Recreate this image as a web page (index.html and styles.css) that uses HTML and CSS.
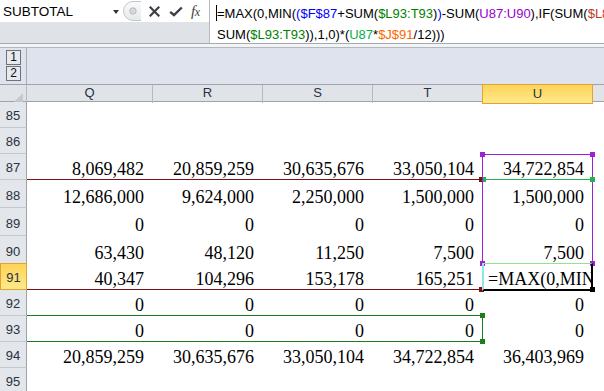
FILE: index.html
```html
<!DOCTYPE html>
<html>
<head>
<meta charset="utf-8">
<link rel="stylesheet" href="styles.css">
</head>
<body>
<div class="fbar">
  <div class="fbar-left">
    <div class="fbar-top">
      <div class="namebox"><span class="nb-text">SUBTOTAL</span><span class="dd"></span></div>
      <svg class="grip" width="18" height="22" viewBox="0 0 18 22">
        <defs><linearGradient id="gg" x1="0" y1="0" x2="0" y2="1"><stop offset="0" stop-color="#fbfbfc"/><stop offset="1" stop-color="#e6e8eb"/></linearGradient></defs>
        <path d="M18 1.5 H10 A9.5 9.5 0 0 0 10 20.5 H18" fill="url(#gg)" stroke="#c3c7cc" stroke-width="1"/>
        <circle cx="10" cy="11" r="3.2" fill="#d6d9dd" stroke="#b7bbc0" stroke-width="1"/>
      </svg>
      <div class="btns">
        <svg class="ic-x" width="11" height="11" viewBox="0 0 11 11"><path d="M1.5 1.5 L9.5 9.5 M9.5 1.5 L1.5 9.5" stroke="#3d3f44" stroke-width="2.2" stroke-linecap="square"/></svg>
        <svg class="ic-ok" width="14" height="11" viewBox="0 0 14 11"><path d="M1.2 5.8 L5 9.2 L12.8 1.5" fill="none" stroke="#3d3f44" stroke-width="2.4"/></svg>
        <span class="fx">f<span class="fx-x">x</span></span>
      </div>
    </div>
    <div class="fbar-rest"></div>
  </div>
  <div class="formula">
    <div class="fline"><span class="cursor"></span>=MAX(0,MIN(<span class="c-b">(</span><span class="c-b">$F$87</span>+SUM(<span class="c-g">$L93:T93</span>)<span class="c-b">)</span>-SUM(<span class="c-p">U87:U90</span>),IF(SUM(<span class="c-m">$L8</span></div>
    <div class="fline">SUM(<span class="c-g">$L93:T93</span>)),1,0)*(<span class="c-l">U87</span>*<span class="c-o">$J$91</span>/12)))</div>
  </div>
</div>
<div class="sep"></div>
<div class="outline">
  <div class="ol-left">
    <span class="olbtn">1</span>
    <span class="olbtn">2</span>
  </div>
  <div class="ol-fill"></div>
</div>
<div class="colhead">
  <div class="corner"><span class="corner-tri"></span></div>
  <div class="ch">Q</div>
  <div class="ch">R</div>
  <div class="ch">S</div>
  <div class="ch">T</div>
  <div class="ch ch-sel">U</div>
  <div class="ch ch-last"></div>
</div>
<div class="sheet">
  <div class="rh">85</div><div class="c"></div><div class="c"></div><div class="c"></div><div class="c"></div><div class="c"></div><div class="c"></div>
  <div class="rh">86</div><div class="c"></div><div class="c"></div><div class="c"></div><div class="c"></div><div class="c"></div><div class="c"></div>
  <div class="rh">87</div><div class="c">8,069,482</div><div class="c">20,859,259</div><div class="c">30,635,676</div><div class="c">33,050,104</div><div class="c">34,722,854</div><div class="c"></div>
  <div class="rh">88</div><div class="c">12,686,000</div><div class="c">9,624,000</div><div class="c">2,250,000</div><div class="c">1,500,000</div><div class="c">1,500,000</div><div class="c"></div>
  <div class="rh">89</div><div class="c">0</div><div class="c">0</div><div class="c">0</div><div class="c">0</div><div class="c">0</div><div class="c"></div>
  <div class="rh">90</div><div class="c">63,430</div><div class="c">48,120</div><div class="c">11,250</div><div class="c">7,500</div><div class="c">7,500</div><div class="c"></div>
  <div class="rh rh-sel">91</div><div class="c">40,347</div><div class="c">104,296</div><div class="c">153,178</div><div class="c">165,251</div><div class="c c-edit">=MAX(0,MIN</div><div class="c"></div>
  <div class="rh">92</div><div class="c">0</div><div class="c">0</div><div class="c">0</div><div class="c">0</div><div class="c">0</div><div class="c"></div>
  <div class="rh">93</div><div class="c">0</div><div class="c">0</div><div class="c">0</div><div class="c">0</div><div class="c">0</div><div class="c"></div>
  <div class="rh">94</div><div class="c">20,859,259</div><div class="c">30,635,676</div><div class="c">33,050,104</div><div class="c">34,722,854</div><div class="c">36,403,969</div><div class="c"></div>
  <div class="rh">95</div><div class="c"></div><div class="c"></div><div class="c"></div><div class="c"></div><div class="c"></div><div class="c"></div>

  <div class="ov line-maroon l1"></div>
  <div class="ov hd hd-maroon h1"></div>
  <div class="ov line-maroon l2"></div>
  <div class="ov hd hd-maroon h2"></div>
  <div class="ov box-purple"></div>
  <div class="ov hd hd-purple p1"></div>
  <div class="ov hd hd-purple p2"></div>
  <div class="ov hd hd-purple p3"></div>
  <div class="ov hd hd-purple p4"></div>
  <div class="ov line-lime"></div>
  <div class="ov hd hd-lime g1"></div>
  <div class="ov hd hd-lime g2"></div>
  <div class="ov box-green"></div>
  <div class="ov hd hd-green d1"></div>
  <div class="ov hd hd-green d2"></div>
  <div class="ov active"></div>
  <div class="ov hd hd-black fill"></div>
</div>
</body>
</html>
```

FILE: styles.css
```css
* { box-sizing: border-box; margin: 0; padding: 0; }
body {
  margin: 0;
  width: 604px;
  height: 391px;
  overflow: hidden;
  background: #fff;
  font-family: "Liberation Sans", Arial, sans-serif;
}

/* formula bar */
.fbar {
  display: flex;
  height: 44px;
  border-bottom: 1px solid #a5aab0;
}
.fbar-left {
  width: 210px;
  display: flex;
  flex-direction: column;
  border-right: 1px solid #b7bbc1;
}
.fbar-top {
  height: 22px;
  display: flex;
  align-items: center;
  background: #fff;
}
.fbar-rest {
  flex: 1;
  background: #dfe3e8;
}
.namebox {
  width: 124px;
  display: flex;
  align-items: center;
  padding-left: 3px;
  font-size: 13.5px;
  color: #000;
}
.nb-text { flex: 1; }
.dd {
  width: 0;
  height: 0;
  border-left: 3.5px solid transparent;
  border-right: 3.5px solid transparent;
  border-top: 4px solid #333;
  margin-right: 5px;
  margin-top: 1px;
}
.grip { display: block; margin-left: -1px; }
.btns {
  display: flex;
  align-items: center;
  padding-left: 8px;
}
.ic-x { display: block; margin-top: 1px; }
.ic-ok { display: block; margin-left: 9px; margin-top: 1px; }
.fx {
  margin-left: 8px;
  font-family: "Liberation Serif", "Times New Roman", serif;
  font-style: italic;
  font-size: 15px;
  color: #3d3f44;
  letter-spacing: -0.5px;
}
.fx-x { font-size: 12px; }

.formula {
  flex: 1;
  background: #fff;
  padding-left: 7px;
  padding-top: 3px;
  font-size: 13px;
  line-height: 21px;
  color: #000;
  white-space: nowrap;
  overflow: hidden;
}
.fline { position: relative; height: 21px; }
.cursor {
  position: absolute;
  left: -1px;
  top: 2px;
  width: 1px;
  height: 16px;
  background: #000;
}
.c-b { color: #0000ff; }
.c-g { color: #008000; }
.c-p { color: #9900cc; }
.c-m { color: #c0392b; }
.c-l { color: #00b050; }
.c-o { color: #ff6600; }

.sep {
  height: 4px;
  background: #f3f4f6;
  border-bottom: 1px solid #b3b8be;
}

/* outline area */
.outline {
  display: flex;
  height: 36px;
  background: #dfe3ed;
}
.ol-left {
  width: 27px;
  border-right: 1px solid #a9aeb5;
  display: flex;
  flex-direction: column;
  padding-left: 6px;
  padding-top: 2px;
  gap: 1px;
}
.olbtn {
  width: 15px;
  height: 15px;
  border: 1px solid #6e7278;
  background: #e6e9ef;
  font-size: 12px;
  line-height: 13px;
  text-align: center;
  color: #111;
}
.ol-fill { flex: 1; }

/* column header */
.colhead {
  display: grid;
  grid-template-columns: 27px 126px 110px 110px 110px 110px 1fr;
  height: 18px;
  border-top: 1px solid #9ea3aa;
  border-bottom: 1px solid #9ea3aa;
  background: #e0e3e8;
}
.corner {
  position: relative;
  border-right: 1px solid #b5bac0;
}
.corner-tri {
  position: absolute;
  right: 3px;
  bottom: 1px;
  width: 0;
  height: 0;
  border-left: 9px solid transparent;
  border-bottom: 9px solid #c4c8cd;
}
.ch {
  border-right: 1px solid #b5bac0;
  font-size: 13px;
  line-height: 16px;
  text-align: center;
  color: #2a3142;
}
.ch-last { border-right: 0; }
.ch-sel {
  background: linear-gradient(#fdd35a, #ffe98a);
  border: 1px solid #e2a42c;
  margin-top: -1px;
  margin-bottom: -1px;
  margin-left: -1px;
  line-height: 18px;
}

/* sheet */
.sheet {
  position: relative;
  display: grid;
  grid-template-columns: 27px 126px 110px 110px 110px 110px 1fr;
  grid-template-rows: 26px 26px 26px 28px 28px 28px 26px 26px 26px 26px 26px;
}
.rh {
  background: #e3e6ea;
  border-right: 1px solid #9ea3aa;
  border-bottom: 1px solid #c4c8ce;
  font-size: 13px;
  color: #2a3142;
  display: flex;
  align-items: flex-end;
  justify-content: center;
  padding-bottom: 4px;
  line-height: 14px;
}
.rh-sel {
  background: linear-gradient(#fdd35a, #ffe98a);
  border: 1px solid #e2a42c;
  margin-top: -1px;
}
.c {
  font-family: "Liberation Serif", "Times New Roman", serif;
  font-size: 18px;
  line-height: 20px;
  color: #000;
  display: flex;
  align-items: flex-end;
  justify-content: flex-end;
  padding-right: 9px;
  padding-bottom: 1px;
  white-space: nowrap;
  overflow: hidden;
}
.c-edit {
  justify-content: flex-start;
  padding-left: 5px;
  padding-right: 0;
}

.ov { position: absolute; }
.hd { width: 5px; height: 5px; }
.line-maroon { left: 27px; width: 456px; height: 1px; background: #7f1010; }
.l1 { top: 77px; }
.l2 { top: 187px; }
.hd-maroon { background: #7f1010; left: 479px; }
.h1 { top: 75px; }
.h2 { top: 185px; }

.box-purple {
  left: 482px;
  top: 52px;
  width: 111px;
  height: 110px;
  border: 1px solid #a020d8;
}
.hd-purple { background: #a020d8; }
.p1 { left: 480px; top: 50px; }
.p2 { left: 590px; top: 50px; }
.p3 { left: 480px; top: 159px; }
.p4 { left: 590px; top: 159px; }

.line-lime { left: 483px; top: 77px; width: 109px; height: 1px; background: #22b34a; }
.hd-lime { background: #22b34a; top: 75px; }
.g1 { left: 483px; width: 3px; }
.g2 { left: 590px; }

.box-green {
  left: 27px;
  top: 213px;
  width: 456px;
  height: 27px;
  border-top: 1px solid #1b7d1b;
  border-bottom: 1px solid #1b7d1b;
  border-right: 1px solid #1b7d1b;
}
.hd-green { background: #1b7d1b; left: 480px; }
.d1 { top: 211px; }
.d2 { top: 237px; }

.active {
  left: 482px;
  top: 161px;
  width: 111px;
  height: 28px;
  border-top: 1px solid #8de58d;
  border-left: 2px solid #8de6ee;
  border-right: 2px solid #000;
  border-bottom: 2px solid #000;
}
.hd-black { background: #000; }
.fill { left: 590px; top: 185px; }
```
